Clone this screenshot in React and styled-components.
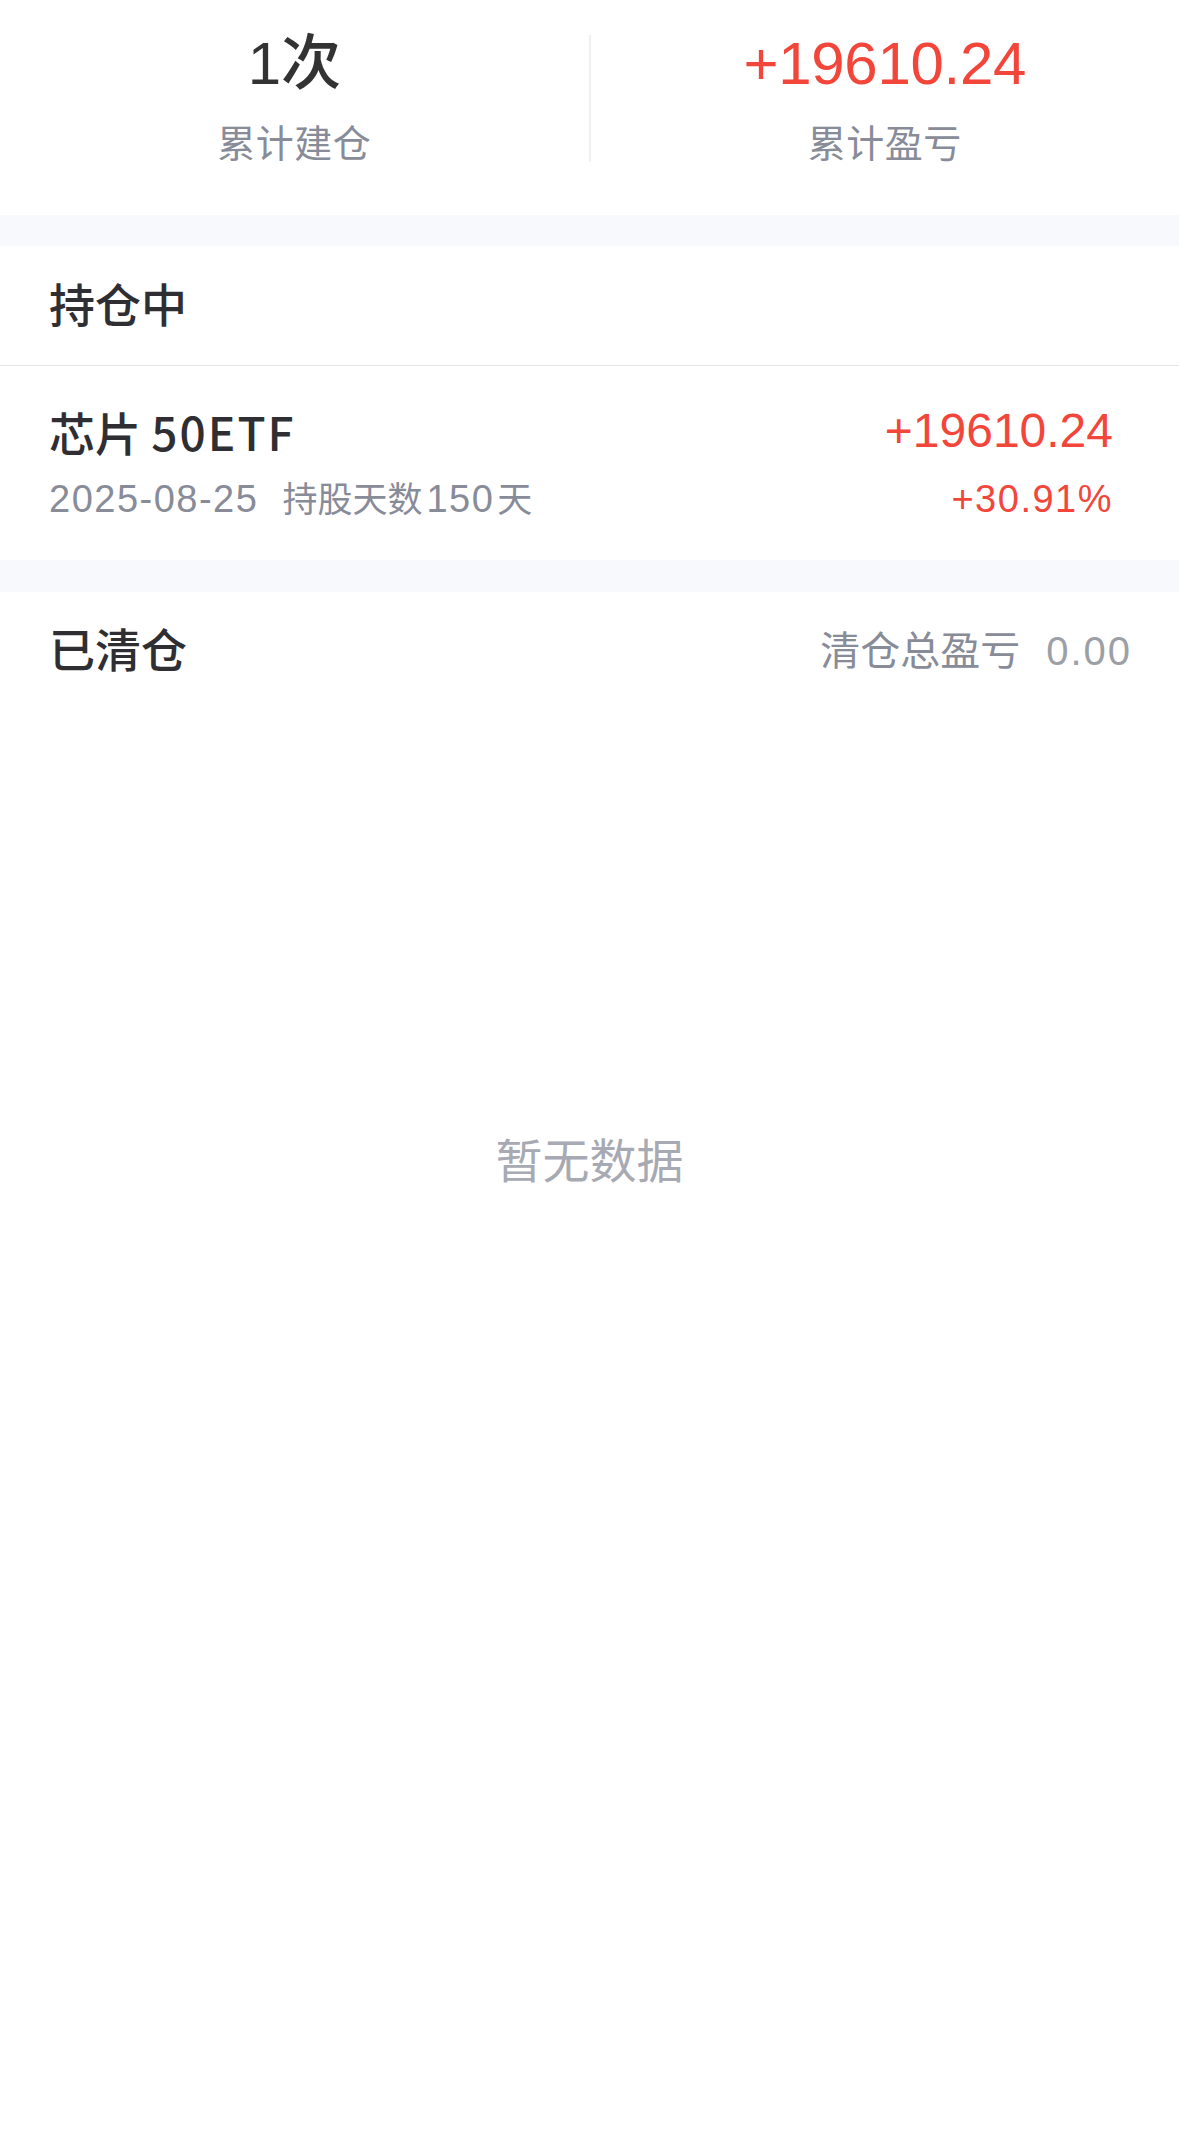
import React from 'react';
import styled, { createGlobalStyle } from 'styled-components';

const GlobalStyle = createGlobalStyle`
  html, body {
    margin: 0;
    padding: 0;
    background: #ffffff;
  }
  body {
    font-family: 'Liberation Sans', 'Noto Sans CJK SC', sans-serif;
    color: #333333;
  }
  * {
    box-sizing: border-box;
  }
`;

const Page = styled.div`
  width: 1179px;
  min-height: 2155px;
  background: #ffffff;
  display: flex;
  flex-direction: column;
`;

const StatsBar = styled.section`
  display: flex;
  align-items: center;
  padding: 36px 0 50px;
  background: #ffffff;
`;

const StatColumn = styled.div`
  flex: 1;
  display: flex;
  flex-direction: column;
  align-items: center;
`;

const StatValue = styled.div`
  font-size: 60px;
  line-height: 56px;
  font-weight: 500;
  letter-spacing: -0.3px;
  color: ${props => (props.red ? '#f2463b' : '#333333')};
`;

const StatLabel = styled.div`
  margin-top: 31px;
  font-size: 38px;
  line-height: 42px;
  letter-spacing: 0.5px;
  color: #888b98;
`;

const VerticalRule = styled.div`
  width: 2px;
  height: 127px;
  margin-top: -4px;
  background: #f0f0f2;
`;

const Band = styled.div`
  height: ${props => props.h || 31}px;
  background: #f8f9fc;
`;

const SectionHeader = styled.div`
  display: flex;
  align-items: center;
  justify-content: space-between;
  height: ${props => props.h || 120}px;
  padding: 0 47px 0 49px;
  border-bottom: ${props => (props.divided ? '1.5px solid #e7e7ea' : 'none')};
`;

const SectionTitle = styled.h2`
  margin: 0;
  font-size: 46px;
  line-height: 56px;
  font-weight: 500;
  color: #2f2f33;
`;

const Summary = styled.div`
  font-size: 40px;
  line-height: 48px;
  color: #888b98;
  display: flex;
  gap: 26px;
`;

const SummaryNumber = styled.span`
  letter-spacing: 2px;
  color: #9d9fa6;
`;

const PositionRow = styled.div`
  display: flex;
  justify-content: space-between;
  padding: 37px 66px 38px 49px;
`;

const RowSide = styled.div`
  display: flex;
  flex-direction: column;
  align-items: ${props => (props.right ? 'flex-end' : 'flex-start')};
`;

const RowTitle = styled.div`
  font-family: 'Noto Sans CJK SC', 'Liberation Sans', sans-serif;
  font-size: 46px;
  line-height: 56px;
  font-weight: 500;
  color: #2f2f33;
`;

const TitleCode = styled.span`
  letter-spacing: 2px;
`;

const RowProfit = styled.div`
  font-size: 48px;
  line-height: 56px;
  color: #f2463b;
`;

const RowSub = styled.div`
  margin-top: 18px;
  font-size: 35px;
  line-height: 44px;
  color: ${props => (props.red ? '#f2463b' : '#888b98')};
  display: flex;
  align-items: baseline;
`;

const Num = styled.span`
  font-size: 38px;
  letter-spacing: 1.5px;
  margin: ${props => props.m || '0'};
`;

const Empty = styled.div`
  padding-top: 424px;
  text-align: center;
  font-size: 47px;
  line-height: 56px;
  color: #a8aab3;
`;

export default function App() {
  return (
    <Page>
      <GlobalStyle />
      <StatsBar>
        <StatColumn>
          <StatValue>1次</StatValue>
          <StatLabel>累计建仓</StatLabel>
        </StatColumn>
        <VerticalRule />
        <StatColumn>
          <StatValue red>+19610.24</StatValue>
          <StatLabel>累计盈亏</StatLabel>
        </StatColumn>
      </StatsBar>

      <Band h={31} />

      <SectionHeader h={120} divided>
        <SectionTitle>持仓中</SectionTitle>
      </SectionHeader>
      <PositionRow>
        <RowSide>
          <RowTitle>
            芯片 <TitleCode>50ETF</TitleCode>
          </RowTitle>
          <RowSub>
            <Num m="0 24px 0 0">2025-08-25</Num>
            <span>持股天数</span>
            <Num m="0 3px 0 4px">150</Num>
            <span>天</span>
          </RowSub>
        </RowSide>
        <RowSide right>
          <RowProfit>+19610.24</RowProfit>
          <RowSub red>
            <Num>+30.91%</Num>
          </RowSub>
        </RowSide>
      </PositionRow>

      <Band h={32} />

      <SectionHeader h={118}>
        <SectionTitle>已清仓</SectionTitle>
        <Summary>
          <span>清仓总盈亏</span>
          <SummaryNumber>0.00</SummaryNumber>
        </Summary>
      </SectionHeader>
      <Empty>暂无数据</Empty>
    </Page>
  );
}
